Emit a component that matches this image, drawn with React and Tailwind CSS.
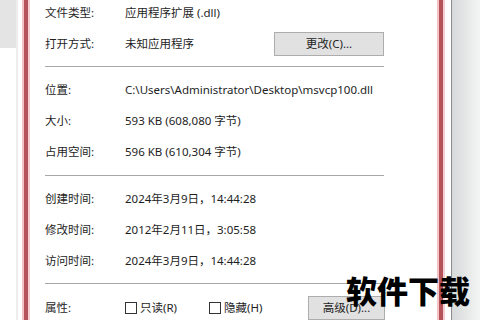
import React from "react";

const font = { fontFamily: '"Noto Sans", "Noto Sans CJK SC", sans-serif' };

function Row({ label, children, className = "" }) {
  return (
    <div className={"flex items-center h-[31px] " + className}>
      <div className="w-[80px] shrink-0">{label}</div>
      <div className="flex-1 flex items-center">{children}</div>
    </div>
  );
}

function Sep({ className = "" }) {
  return <div className={"h-px bg-[#a8a8a8] " + className} />;
}

function Box() {
  return <span className="inline-block w-[12px] h-[12px] border border-[#333] bg-white mr-[3px]" />;
}

export default function App() {
  return (
    <div
      className="relative w-[480px] h-[320px] overflow-hidden bg-white flex text-[11.5px] text-[#1e1e1e]"
      style={font}
    >
      <div className="w-[16px] shrink-0 flex flex-col">
        <div className="h-[48px] bg-[#e4e4e4]" />
      </div>
      <div className="w-[2px] shrink-0 bg-[#eeeeee]" />
      <div className="w-[4px] shrink-0" />
      <div className="w-[2px] shrink-0 bg-[#f2c4c6]" />
      <div className="w-[4px] shrink-0 bg-[#b4535a]" />
      <div className="w-[2px] shrink-0 bg-[#f4cfd1]" />
      <div className="flex-1 pl-[15px]">
        <div className="w-[339px] flex flex-col mt-[-3px]">
          <Row label="文件类型:">应用程序扩展 (.dll)</Row>
          <Row label="打开方式:">
            <span>未知应用程序</span>
            <div className="ml-auto w-[110px] h-[24px] bg-[#e1e1e1] border border-[#adadad] flex items-center justify-center">
              更改(C)...
            </div>
          </Row>
          <Sep className="mt-[7px]" />
          <Row label="位置:" className="mt-[7px]">C:\Users\Administrator\Desktop\msvcp100.dll</Row>
          <Row label="大小:">593 KB (608,080 字节)</Row>
          <Row label="占用空间:">596 KB (610,304 字节)</Row>
          <Sep className="mt-[8px]" />
          <Row label="创建时间:" className="mt-[7px]">2024年3月9日，14:44:28</Row>
          <Row label="修改时间:">2012年2月11日，3:05:58</Row>
          <Row label="访问时间:">2024年3月9日，14:44:28</Row>
          <Sep className="mt-[7px]" />
          <Row label="属性:" className="mt-[8px]">
            <div className="w-[84px] flex items-center">
              <Box />
              <span>只读(R)</span>
            </div>
            <div className="w-[99px] flex items-center">
              <Box />
              <span>隐藏(H)</span>
            </div>
            <div className="w-[77px] h-[24px] bg-[#e1e1e1] border border-[#adadad] flex items-center justify-center">
              高级(D)...
            </div>
          </Row>
        </div>
      </div>
      <div className="w-[2px] shrink-0 bg-[#f2c4c6]" />
      <div className="w-[4px] shrink-0 bg-[#b4535a]" />
      <div className="w-[2px] shrink-0 bg-[#f4cfd1]" />
      <div className="w-[6px] shrink-0 bg-white" />
      <div className="w-px shrink-0 bg-[#8c8c8c]" />
      <div className="w-[28px] shrink-0 bg-gradient-to-r from-[#d6dada] to-[#f4f4f4]" />
      <div
        className="absolute left-[346px] top-[274px] text-[31px] leading-none font-black text-black"
        style={{ fontFamily: '"Noto Sans CJK SC", sans-serif' }}
      >
        软件下载
      </div>
    </div>
  );
}
